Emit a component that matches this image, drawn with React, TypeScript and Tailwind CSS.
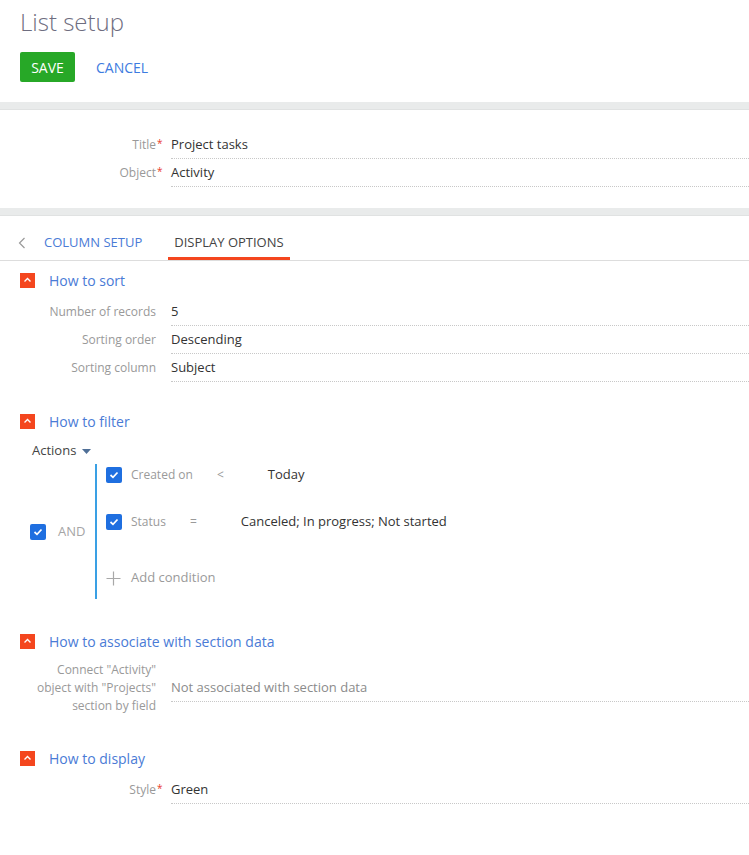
import type { ReactNode } from 'react';

// ── Small drawings ────────────────────────────────────────────────────────────
function Collapse() {
  return (
    <span className="w-[15px] h-[15px] bg-[#f4461e] flex items-center justify-center shrink-0">
      <svg width="9" height="6" viewBox="0 0 9 6" fill="none">
        <polyline points="1.5,4.5 4.5,1.5 7.5,4.5" stroke="#fff" strokeWidth="1.4" />
      </svg>
    </span>
  );
}

function Check() {
  return (
    <span className="w-[16px] h-[16px] rounded-[2px] bg-[#1f6fe0] flex items-center justify-center shrink-0">
      <svg width="10" height="8" viewBox="0 0 10 8" fill="none">
        <polyline points="1.5,4 4,6.3 8.5,1.5" stroke="#fff" strokeWidth="1.7" />
      </svg>
    </span>
  );
}

// ── Form row: right-aligned caption, value on a dotted line ──────────────────
function Field({ label, value, required, muted }: { label: ReactNode; value: string; required?: boolean; muted?: boolean }) {
  return (
    <div className="flex items-center">
      <div className="w-[156px] shrink-0 text-right text-[12px] text-[#999] leading-[18px]">{label}</div>
      <div className="w-[15px] shrink-0 self-start pt-[7px] pl-[1px] text-[#e8392b] text-[10px] leading-none h-[28px]">
        {required ? '*' : ''}
      </div>
      <div
        className={`flex-1 h-[28px] flex items-center border-b border-dotted border-[#c8c8c8] ${muted ? 'text-[#8b8b8b]' : 'text-[#333]'}`}
      >
        {value}
      </div>
    </div>
  );
}

function SectionHead({ title }: { title: string }) {
  return (
    <div className="flex items-center h-[20px] pl-[20px] gap-[14px]">
      <Collapse />
      <span className="text-[14px] text-[#4a7bd6]">{title}</span>
    </div>
  );
}

function Condition({ name, op, value, opGap }: { name: string; op: string; value: string; opGap: string }) {
  return (
    <div className="flex items-center h-[22px]">
      <Check />
      <span className="ml-[9px] mr-[24px] text-[12px] text-[#9a9a9a]">{name}</span>
      <span className={`text-[12px] text-[#9a9a9a] ${opGap}`}>{op}</span>
      <span className="text-[#333]">{value}</span>
    </div>
  );
}

export default function App() {
  return (
    <div className="w-[749px] min-h-[855px] bg-white overflow-hidden text-[13px]" style={{ fontFamily: '"Open Sans", "Liberation Sans", sans-serif' }}>
      {/* Header */}
      <div className="px-[20px] pt-[6px] pb-[20px]">
        <h1 className="text-[24px] leading-[32px] font-light text-[#6e6d80]">List setup</h1>
        <div className="mt-[14px] flex items-center gap-[21px]">
          <button className="h-[30px] w-[55px] rounded-[2px] bg-[#27a827] text-white text-[14px] font-medium">SAVE</button>
          <button className="text-[14px] text-[#3d7be0]">CANCEL</button>
        </div>
      </div>

      <div className="h-[8px] bg-[#e9ebeb] border-b border-[#e0e2e2]" />

      {/* Title / object card */}
      <div className="pt-[21px] pb-[21px] rounded-tl-[3px]">
        <Field label="Title" value="Project tasks" required />
        <Field label="Object" value="Activity" required />
      </div>

      <div className="h-[8px] bg-[#e9ebeb] border-b border-[#e0e2e2]" />

      {/* Options card */}
      <div className="pt-[10px] pb-[40px]">
        <div className="flex items-stretch h-[35px] border-b border-[#dddddd] pl-[18px]">
          <div className="flex items-center w-[20px] text-[#999]">
            <svg width="8" height="12" viewBox="0 0 8 12" fill="none">
              <polyline points="6.5,1 1.5,6 6.5,11" stroke="#9a9a9a" strokeWidth="1.2" />
            </svg>
          </div>
          <div className="flex items-center px-[6px] text-[#4a7bd6]">COLUMN SETUP</div>
          <div className="ml-[20px] flex items-center px-[6px] text-[#444] border-b-[3px] border-[#f4461e] pt-[3px]">DISPLAY OPTIONS</div>
        </div>

        {/* How to sort */}
        <div className="mt-[9px]">
          <SectionHead title="How to sort" />
          <div className="mt-[8px]">
            <Field label="Number of records" value="5" />
            <Field label="Sorting order" value="Descending" />
            <Field label="Sorting column" value="Subject" />
          </div>
        </div>

        {/* How to filter */}
        <div className="mt-[29px]">
          <SectionHead title="How to filter" />
          <div className="mt-[10px] pl-[32px] h-[20px] flex items-center gap-[6px] text-[#444]">
            Actions
            <svg width="9" height="5" viewBox="0 0 9 5">
              <polygon points="0,0 9,0 4.5,5" fill="#4f6f97" />
            </svg>
          </div>
          <div className="mt-[3px] flex">
            <div className="w-[95px] pl-[30px] flex items-center">
              <Check />
              <span className="ml-[12px] text-[#a5a5a5]">AND</span>
            </div>
            <div className="border-l-[2px] border-[#3aa0e4] pl-[9px] pb-[10px]">
              <Condition name="Created on" op="<" value="Today" opGap="mr-[44px]" />
              <div className="mt-[25px]">
                <Condition name="Status" op="=" value="Canceled; In progress; Not started" opGap="mr-[44px]" />
              </div>
              <div className="mt-[34px] h-[22px] flex items-center text-[#9a9a9a]">
                <svg width="15" height="15" viewBox="0 0 15 15" fill="none">
                  <path d="M7.5 0.5v14M0.5 7.5h14" stroke="#a8a8a8" strokeWidth="1.2" />
                </svg>
                <span className="ml-[10px]">Add condition</span>
              </div>
            </div>
          </div>
        </div>

        {/* How to associate */}
        <div className="mt-[32px]">
          <SectionHead title="How to associate with section data" />
          <div className="mt-[10px]">
            <Field
              label={
                <>
                  Connect "Activity"
                  <br />
                  object with "Projects"
                  <br />
                  section by field
                </>
              }
              value="Not associated with section data"
              muted
            />
          </div>
        </div>

        {/* How to display */}
        <div className="mt-[33px]">
          <SectionHead title="How to display" />
          <div className="mt-[8px]">
            <Field label="Style" value="Green" required />
          </div>
        </div>
      </div>
    </div>
  );
}
